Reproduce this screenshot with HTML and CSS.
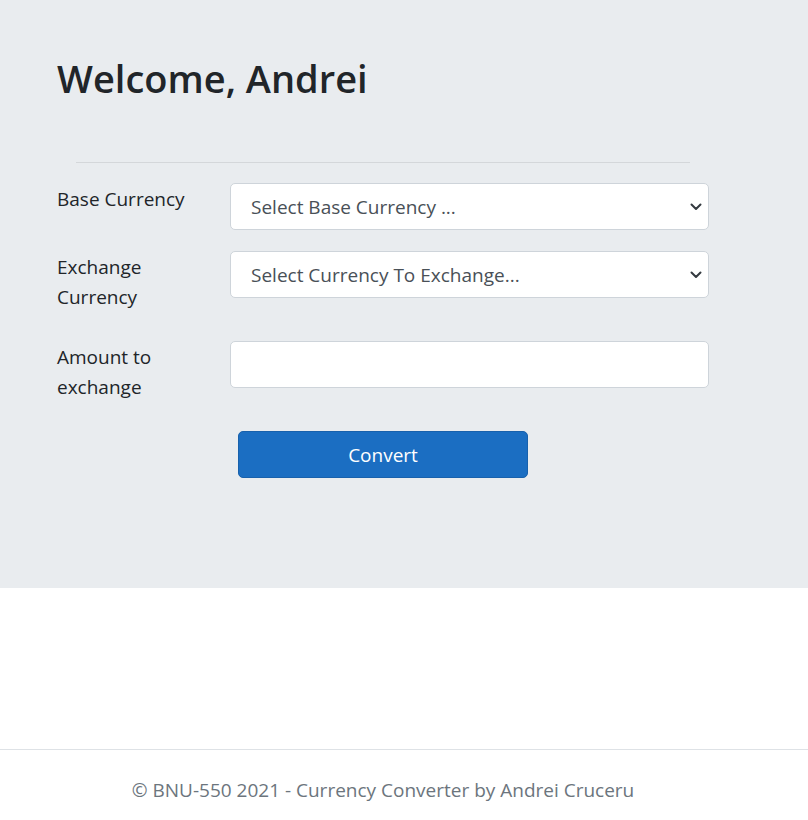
FILE: index.html
```html
<!DOCTYPE html>
<html lang="en">
<head>
<meta charset="utf-8">
<title>Currency Converter</title>
<link rel="stylesheet" href="styles.css">
</head>
<body>
<div class="jumbotron">
  <div class="container">
    <h1 class="title">Welcome, Andrei</h1>
    <hr class="divider">
    <form class="form">
      <div class="form-row">
        <label class="form-label" for="base">Base Currency</label>
        <div class="select-wrap">
          <select id="base" class="control select">
            <option>Select Base Currency ...</option>
          </select>
          <svg class="chevron" width="12" height="8" viewBox="0 0 12 8"><path d="M1.5 1.5 L6 6 L10.5 1.5" fill="none" stroke="#343a40" stroke-width="2" stroke-linecap="round" stroke-linejoin="round"/></svg>
        </div>
      </div>
      <div class="form-row">
        <label class="form-label" for="exch">Exchange Currency</label>
        <div class="select-wrap">
          <select id="exch" class="control select">
            <option>Select Currency To Exchange...</option>
          </select>
          <svg class="chevron" width="12" height="8" viewBox="0 0 12 8"><path d="M1.5 1.5 L6 6 L10.5 1.5" fill="none" stroke="#343a40" stroke-width="2" stroke-linecap="round" stroke-linejoin="round"/></svg>
        </div>
      </div>
      <div class="form-row">
        <label class="form-label" for="amount">Amount to exchange</label>
        <input id="amount" class="control" type="text">
      </div>
      <div class="actions">
        <button type="button" class="btn">Convert</button>
      </div>
    </form>
  </div>
</div>
<div class="spacer"></div>
<footer class="footer">
  <div class="container footer-text">© BNU-550 2021 - Currency Converter by Andrei Cruceru</div>
</footer>
</body>
</html>
```
FILE: styles.css
```css
html, body {
  margin: 0;
  padding: 0;
}
body {
  font-family: "Open Sans", "Noto Sans", "Liberation Sans", sans-serif;
  font-size: 20px;
  line-height: 30px;
  color: #212529;
  background: #fff;
}
.jumbotron {
  background: #e9ecef;
  padding: 54px 57px 110px;
  height: 588px;
  box-sizing: border-box;
}
.container {
  width: 652px;
}
.title {
  margin: 0;
  font-size: 38px;
  line-height: 48px;
  font-weight: 600;
  color: #212529;
}
.divider {
  margin: 60px 19px 20px;
  border: 0;
  border-top: 1px solid #d4d7da;
}
.form-row {
  display: grid;
  grid-template-columns: 173px 1fr;
  align-items: start;
  margin-bottom: 20px;
}
.form-row:first-child {
  margin-bottom: 21px;
}
.form-label {
  display: block;
  padding-top: 1px;
  padding-right: 18px;
  margin-bottom: 9px;
  font-size: 19px;
  line-height: 30px;
}
.select-wrap {
  position: relative;
}
.control {
  display: block;
  width: 100%;
  height: 47px;
  box-sizing: border-box;
  border: 1px solid #ced4da;
  border-radius: 5px;
  background: #fff;
  font-family: inherit;
  font-size: 19px;
  color: #495057;
  padding: 0 36px 0 20px;
  margin: 0;
}
.select {
  -webkit-appearance: none;
  appearance: none;
}
.chevron {
  position: absolute;
  right: 7px;
  top: 20px;
  pointer-events: none;
}
.actions {
  display: flex;
  justify-content: center;
}
.btn {
  width: 290px;
  height: 47px;
  border: 1px solid #1861ac;
  border-radius: 5px;
  background: #1b6ec2;
  color: #fff;
  font-family: inherit;
  font-size: 19px;
  padding: 0;
}
.spacer {
  height: 161px;
}
.footer {
  border-top: 1px solid #dee2e6;
  padding: 25px 57px 0;
}
.footer-text {
  text-align: center;
  color: #6c757d;
  font-size: 19px;
  line-height: 30px;
}
```
